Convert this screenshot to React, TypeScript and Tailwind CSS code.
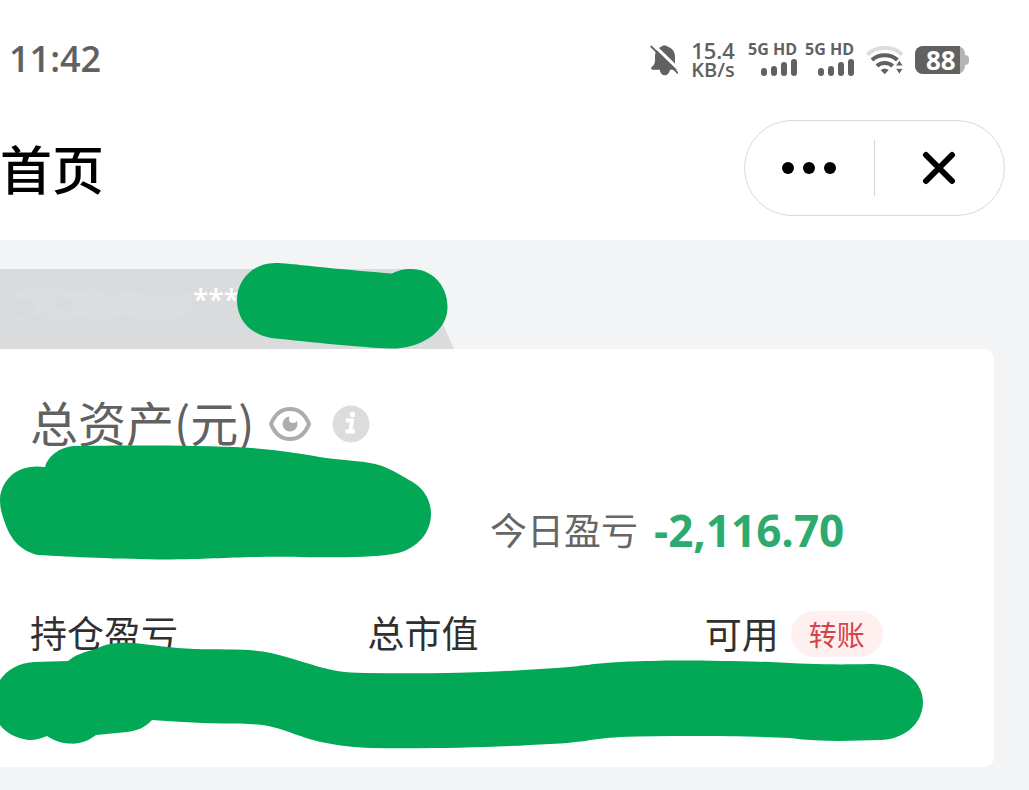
import React from "react";

const MASK = "#02a855";

function BellOff() {
  return (
    <svg viewBox="27 38 87 99" className="h-[33px] w-[29px]" role="img" aria-label="静音">
      <path
        d="M37 115c-4-1-5-6-1-9 6-5 8-9 9-18V76c0-18 9-27 19-30 3-5 16-5 19 0 13 4 22 14 22 30v24l10 12-4 3H90c-2 10-8 17-16 17s-13-7-15-17z"
        fill="#616161"
      />
      <path d="M36 36l84 82" stroke="#fff" strokeWidth="9" />
      <path d="M34 46l78 78" stroke="#616161" strokeWidth="6" strokeLinecap="round" />
    </svg>
  );
}

function Signal() {
  return (
    <div className="flex flex-col items-end gap-0.5">
      <span className="text-base leading-4 font-bold">5G HD</span>
      <div className="flex items-end gap-1">
        <span className="h-2 w-1.5 rounded-sm bg-[#616161]" />
        <span className="h-2.5 w-1.5 rounded-sm bg-[#616161]" />
        <span className="h-3.5 w-1.5 rounded-sm bg-[#616161]" />
        <span className="h-[17px] w-1.5 rounded-sm bg-[#616161]" />
      </div>
    </div>
  );
}

function Wifi() {
  return (
    <svg viewBox="680 44 111 90" className="h-[30px] w-[37px]" role="img" aria-label="无线网络">
      <g fill="none" strokeWidth="12">
        <path d="M684 73C712 45 761 45 788 73" stroke="#dcdcdc" />
        <path d="M698 89C718 70 754 70 774 89" stroke="#616161" />
        <path d="M713 107C725 95 747 95 760 107" stroke="#616161" />
      </g>
      <path d="M724 119q12-9 24 0l-12 13z" fill="#616161" />
      <path d="M780 89l12 18h-24zM780 132l12-18h-24z" fill="#616161" stroke="#fff" strokeWidth="3" />
    </svg>
  );
}

function Battery() {
  return (
    <div className="flex items-center">
      <div className="rounded-lg bg-[#b4b4b4] pr-[5px]">
        <div className="h-7 w-[45px] rounded-l-lg bg-[#616161] pl-[11px] text-[26px] leading-7 font-bold text-white">
          88
        </div>
      </div>
      <span className="h-2.5 w-1 rounded-r bg-[#b4b4b4]" />
    </div>
  );
}

function StatusBar() {
  return (
    <div className="flex h-[120px] items-center justify-between pr-[60px] pl-[9px] font-['Open_Sans',sans-serif] font-semibold text-[#616161]">
      <time className="pb-0.5 text-4xl">11:42</time>
      <div className="flex items-center gap-3">
        <BellOff />
        <div className="flex w-[46px] flex-col items-center">
          <span className="text-[22px] leading-5">15.4</span>
          <span className="text-[20px] leading-5">KB/s</span>
        </div>
        <div className="flex gap-2 pb-1">
          <Signal />
          <Signal />
        </div>
        <Wifi />
        <Battery />
      </div>
    </div>
  );
}

function NavBar() {
  return (
    <div className="flex items-center justify-between pr-6 pb-6">
      <h1 className="text-[52px] leading-none font-medium text-black">首页</h1>
      <div className="flex h-24 w-[261px] items-center rounded-full border border-[#d9d9d9]">
        <button type="button" aria-label="更多" className="flex h-full flex-1 items-center justify-center">
          <svg viewBox="0 0 56 14" className="h-3.5 w-14">
            <circle cx="6" cy="7" r="6" />
            <circle cx="27" cy="7" r="6" />
            <circle cx="48" cy="7" r="6" />
          </svg>
        </button>
        <span className="h-14 w-px bg-[#d4d4d4]" />
        <button type="button" aria-label="关闭" className="flex h-full flex-1 items-center justify-center">
          <svg viewBox="-1 -2 36 36" className="size-9">
            <path d="M3 3l26 26M29 3L3 29" stroke="#000" strokeWidth="6" strokeLinecap="round" />
          </svg>
        </button>
      </div>
    </div>
  );
}

function AccountTab() {
  return (
    <div className="relative">
      <div className="flex h-20 w-[454px] bg-[#dadbdd] pl-[193px] text-[28px] leading-[60px] text-white [clip-path:polygon(0_0,418px_0,100%_100%,0_100%)]">
        <span className="font-['Open_Sans',sans-serif] font-semibold">***</span>
      </div>
      <svg viewBox="0 260 460 90" className="absolute -top-[9px] left-0 h-[90px] w-[460px]" aria-hidden="true">
        <g fill="#dfe0e1" opacity=".5">
          <path d="M12 291l34-3 26 4 22-3 14 8 22-6 30 7 32-5v12l-12 12-32 3-25-6-22 6-25-4-20 5-14-8-28 8z" />
          <path d="M13 303l12-5 12 9-10 12-13-3zM55 296l19 2-4 16-13-5z" fill="#d9dadb" />
        </g>
        <path
          d="M275 263C290 263 310 267 392 273.500C401 269 407 269 411 269C432 269 447.500 285 447.500 307C447.500 330 425 346 397 348.500C375 349 310 342 271 338C250 334 237 320 237 300C237 279 254 263 275 263Z"
          fill={MASK}
        />
      </svg>
    </div>
  );
}

function AssetCard() {
  return (
    <section className="relative mr-[35px] rounded-r-[10px] bg-white pt-[45px] pl-[30px]">
      <div className="flex h-[60px] items-center">
        <h2 className="pb-1.5 text-[48px] leading-none text-[#616161]">总资产(元)</h2>
        <button type="button" aria-label="隐藏金额" className="ml-3.5">
          <svg viewBox="0 0 44 36" className="h-9 w-11">
            <path
              d="M3 18C7 8 14 3 22 3s15 5 19 15C37 28 30 33 22 33S7 28 3 18Z"
              fill="none"
              stroke="#adadad"
              strokeWidth="4"
              strokeLinejoin="round"
            />
            <circle cx="22" cy="18" r="7.500" fill="#adadad" />
            <circle cx="25" cy="13" r="4" fill="#fff" />
          </svg>
        </button>
        <button type="button" aria-label="说明" className="ml-5">
          <svg viewBox="0 0 38 38" className="size-[38px]">
            <circle cx="19" cy="19" r="18.500" fill="#dcdcdc" />
            <circle cx="20.500" cy="9.500" r="2.700" fill="#fff" />
            <path d="M14 15.500h6l-1.500 10M13.500 26.500h9.500" fill="none" stroke="#fff" strokeWidth="3.800" />
          </svg>
        </button>
      </div>

      <div className="mt-[46px] flex h-[60px] items-center gap-4 pl-[460px]">
        <span className="pb-0.5 text-[37px] leading-none whitespace-nowrap text-[#666]">今日盈亏</span>
        <span className="font-['Open_Sans',sans-serif] text-[44px] leading-none font-bold text-[#2daa6e]">
          -2,116.70
        </span>
      </div>

      <div className="mt-[49px] grid h-[158px] grid-cols-[35fr_35fr_30fr] items-start text-[37px] leading-[46px] text-[#303030]">
        <span>持仓盈亏</span>
        <span>总市值</span>
        <div className="flex items-center gap-3">
          <span>可用</span>
          <button
            type="button"
            className="mt-0.5 h-[46px] w-[92px] rounded-full bg-[#fff0f0] text-[28px] leading-[44px] text-[#d5424a]"
          >
            转账
          </button>
        </div>
      </div>

      <svg viewBox="0 440 440 125" className="absolute top-[91px] left-0 h-[125px] w-[440px]" aria-hidden="true">
        <path
          d="M45 467C49 454 62 446 77 446C120 445 200 445 245 447.500C280 450 303 454 326 458C350 461 366 461 379 465C391 469 399 474 409 480C423 487 431 499 431 514C431 532 418 548 398 553C380 557 350 558 300 557C240 556 220 559 165 559.500C120 559 70 557 38 555C20 551 10 538 5 523C2 514 0 510 0 498C2 479 18 463 45 467Z"
          fill={MASK}
        />
      </svg>
      <svg viewBox="0 640 930 112" className="absolute top-[291px] left-0 h-[112px] w-[930px]" aria-hidden="true">
        <path
          d="M0 680C7 670 18 663 34 662L68 661C75 655 84 652 96 649C108 643 118 642.500 133 643C155 645 170 648 195 649C225 650 248 648 271 653C310 662 325 673 365 673C425 674 480 673 540 669C590 667 585 662 650 661C690 660 720 661 770 662C810 664 830 665 869 664C895 663 923 677 923 702C923 725 902 740 880 740C850 741 820 742 790 738C750 736 680 735 620 737C590 739 580 743 550 744C500 747 435 749 370 748C325 746 306 738 286 731C264 723 250 724 223 723.500C195 723 170 721 152 720C145 728 136 731 127 732L96 735C84 744 75 744 69 743.500C60 743 53 740 47 736C38 740 32 740 28 740C15 738 5 732 0 725Z"
          fill={MASK}
        />
      </svg>
    </section>
  );
}

export default function App() {
  return (
    <div className="min-h-screen overflow-x-hidden bg-[#f3f4f6] font-['Noto_Sans_CJK_SC',sans-serif]">
      <header className="bg-white">
        <StatusBar />
        <NavBar />
      </header>
      <main className="pt-[29px] pb-[23px]">
        <AccountTab />
        <AssetCard />
      </main>
    </div>
  );
}
